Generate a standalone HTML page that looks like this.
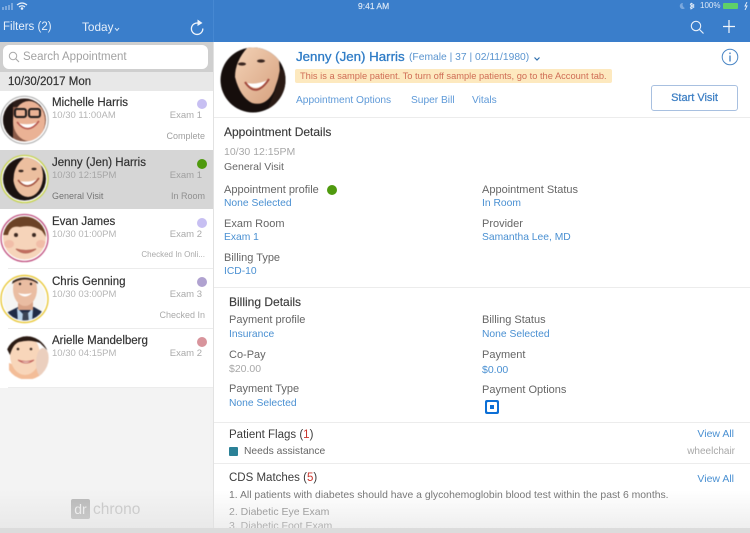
<!DOCTYPE html>
<html><head><meta charset="utf-8">
<style>
html,body{margin:0;padding:0;width:750px;height:533px;overflow:hidden;background:#fff;font-family:"Liberation Sans",sans-serif}
#p{position:absolute;left:0;top:0;width:750px;height:533px;overflow:hidden;background:#fff;filter:blur(.35px)}
.a{position:absolute}
.t{position:absolute;white-space:nowrap;line-height:14px;height:14px;font-size:11px;color:#666}
.r{text-align:right}
.b{color:#4a90d2}
.g{color:#a8a8a8}
.n{font-size:11.5px;color:#333;-webkit-text-stroke:.2px #333}
.h{font-size:12px;color:#3c3c3c;-webkit-text-stroke:.15px #3c3c3c}
.s{font-size:9px;color:#aaa}
.d{position:absolute;width:10px;height:10px;border-radius:50%}
.l{position:absolute;height:1px;background:#ececec}
.f{filter:blur(.4px)}
svg{position:absolute}
</style></head><body><div id="p">

<div class="a" style="left:0;top:0;width:750px;height:42px;background:#3a7ecb"></div>
<div class="a" style="left:213px;top:0;width:1px;height:42px;background:#4688d2"></div>

<!-- status bar -->
<svg style="left:2px;top:2px" width="26" height="8" viewBox="0 0 26 8"><rect x="0" y="5" width="2" height="3" fill="#7ba8dd"/><rect x="3" y="4" width="2" height="4" fill="#7ba8dd"/><rect x="6" y="3" width="2" height="5" fill="#7ba8dd"/><rect x="9" y="1" width="2" height="7" fill="#7ba8dd"/><path d="M15 3Q20 -1 25 3M17 5Q20 2.5 23 5" stroke="#e8f0fa" stroke-width="1.3" fill="none"/><circle cx="20" cy="6.5" r="1.3" fill="#e8f0fa"/></svg>
<div class="t" style="left:358px;top:-1px;font-size:8.5px;color:#dce8f6;-webkit-text-stroke:.15px #dce8f6">9:41 AM</div>
<svg style="left:678px;top:2px" width="72" height="8" viewBox="0 0 72 8"><path d="M5 1A3 3 0 1 0 7 6A3.5 3.5 0 0 1 5 1Z" fill="#7ba8dd"/><path d="M13 1L16 3L12 6M12 2L16 5L13 7V1" stroke="#e8f0fa" fill="none" stroke-width=".8"/><rect x="45" y="1" width="15" height="6" rx="1" fill="#5fd068"/><path d="M69 0L67 4H69L67 8" stroke="#e8f0fa" fill="none" stroke-width=".9"/></svg>
<div class="t" style="left:700px;top:-1px;font-size:8px;color:#dce8f6">100%</div>

<!-- nav -->
<div class="t" style="left:3px;top:20px;font-size:11.5px;color:#e6effa">Filters (2)</div>
<div class="t" style="left:82px;top:20px;font-size:11.8px;color:#e6effa">Today</div>
<svg style="left:114px;top:27px" width="6" height="5" viewBox="0 0 6 5"><path d="M1 1L3 3.5L5 1" stroke="#e6effa" fill="none" stroke-width="1"/></svg>
<svg style="left:189px;top:19px" width="16" height="17" viewBox="0 0 16 17"><path d="M9.5 4.2A5.7 5.7 0 1 0 13.8 9.5" stroke="#eef4fb" stroke-width="1.3" fill="none"/><path d="M8.5 0.5L13.5 4L8.5 7Z" fill="#eef4fb"/></svg>
<svg style="left:689px;top:19px" width="16" height="16" viewBox="0 0 16 16"><circle cx="7" cy="7" r="4.7" stroke="#e6effa" stroke-width="1.1" fill="none"/><path d="M10.5 10.5L14.5 14.5" stroke="#e6effa" stroke-width="1.2"/></svg>
<svg style="left:723px;top:20px" width="12" height="13" viewBox="0 0 12 13"><path d="M6 0V13M0 6.5H12" stroke="#f2f6fc" stroke-width="1.2"/></svg>

<!-- sidebar -->
<div class="a" style="left:0;top:42px;width:213px;height:491px;background:#f3f3f3"></div>
<div class="a" style="left:213px;top:42px;width:1px;height:491px;background:#e2e2e2"></div>
<div class="a" style="left:0;top:42px;width:213px;height:30px;background:#cfcfcf"></div>
<div class="a" style="left:3px;top:45px;width:205px;height:24px;border-radius:6px;background:#fff"></div>
<svg style="left:8px;top:51px" width="12" height="12" viewBox="0 0 12 12"><circle cx="5" cy="5" r="3.7" stroke="#aaa" stroke-width="1" fill="none"/><path d="M7.8 7.8L11 11" stroke="#aaa" stroke-width="1.1"/></svg>
<div class="t" style="left:23px;top:50px;font-size:11.5px;color:#a2a2a2">Search Appointment</div>
<div class="a" style="left:0;top:72px;width:213px;height:19px;background:#e8e8e8"></div>
<div class="t n" style="left:8px;top:75px;font-size:11.5px;color:#333">10/30/2017 Mon</div>

<div class="a" style="left:0;top:91px;width:213px;height:297px;background:#fff"></div>
<div class="a" style="left:0;top:150px;width:213px;height:59px;background:#d6d6d6"></div>
<div class="l" style="left:8px;top:268px;width:205px"></div>
<div class="l" style="left:8px;top:328px;width:205px"></div>
<div class="l" style="left:8px;top:387px;width:205px"></div>

<!-- avatars -->
<svg class="f" style="left:0;top:95px" width="50" height="50" viewBox="0 0 50 50"><defs><clipPath id="c1"><circle cx="24.5" cy="25" r="21.5"/></clipPath></defs><circle cx="24.5" cy="25" r="23.7" fill="#fff" stroke="#a9a9a9" stroke-width="1"/><g clip-path="url(#c1)"><rect width="50" height="50" fill="#8a5a48"/><rect x="0" y="0" width="50" height="12" fill="#2b1c18"/><rect x="0" y="0" width="13" height="50" fill="#1d1412"/><ellipse cx="29" cy="26" rx="16" ry="20" fill="#eab295"/><rect x="15" y="14" width="11" height="8" rx="2" fill="none" stroke="#1e1a1a" stroke-width="2"/><rect x="29" y="14" width="11" height="8" rx="2" fill="none" stroke="#1e1a1a" stroke-width="2"/><path d="M18 28Q28 38 38 27Q28 31 18 28Z" fill="#fff"/><path d="M17 27Q28 41 39 26" stroke="#b5564e" fill="none" stroke-width="1.5"/></g></svg>

<svg class="f" style="left:0;top:154px" width="50" height="50" viewBox="0 0 50 50"><defs><clipPath id="c2"><circle cx="24.5" cy="25" r="21.5"/></clipPath></defs><circle cx="24.5" cy="25" r="23.5" fill="#fff" stroke="#c5d248" stroke-width="1.3"/><g clip-path="url(#c2)"><rect width="50" height="50" fill="#1a1210"/><ellipse cx="28" cy="22" rx="15" ry="21" fill="#ecbf9f"/><path d="M8 4H24Q16 10 14 20Q12 34 16 46L4 46Z" fill="#1a1210"/><path d="M19 27Q28 36 38 25Q29 29 19 27Z" fill="#fff"/><path d="M18 26Q28 39 39 24" stroke="#a0503f" fill="none" stroke-width="1.5"/><ellipse cx="21" cy="17" rx="2.5" ry="1.2" fill="#33221c"/><ellipse cx="34" cy="15" rx="2.5" ry="1.2" fill="#33221c"/></g></svg>

<svg class="f" style="left:0;top:213px" width="50" height="50" viewBox="0 0 50 50"><defs><clipPath id="c3"><circle cx="24.5" cy="25" r="21.5"/></clipPath></defs><circle cx="24.5" cy="25" r="23.5" fill="#fff" stroke="#c0507f" stroke-width="1.3"/><g clip-path="url(#c3)"><rect width="50" height="50" fill="#f6d4ba"/><path d="M2 22Q6 0 26 2Q46 2 46 24L42 18Q32 11 20 14Q10 12 8 22Z" fill="#6b4226"/><circle cx="16" cy="22" r="2" fill="#3c2a22"/><circle cx="34" cy="22" r="2" fill="#3c2a22"/><path d="M16 36Q25 44 36 36Q26 39 16 36Z" fill="#c56d62" stroke="#b76a5a"/><ellipse cx="9" cy="31" rx="5" ry="4" fill="#f1bda8"/><ellipse cx="41" cy="31" rx="5" ry="4" fill="#f1bda8"/></g></svg>

<svg class="f" style="left:0;top:274px" width="50" height="50" viewBox="0 0 50 50"><defs><clipPath id="c4"><circle cx="24.5" cy="25" r="21.5"/></clipPath></defs><circle cx="24.5" cy="25" r="23.5" fill="#fff" stroke="#e9c93c" stroke-width="1.4"/><g clip-path="url(#c4)"><rect width="50" height="50" fill="#f6f6f4"/><path d="M4 50V40L18 33H34L46 40V50Z" fill="#1f2c47"/><path d="M17 34L25 42L33 34L32 50H18Z" fill="#b9d3ea"/><path d="M23 38H28L29 50H22Z" fill="#3a4455"/><rect x="18" y="22" width="15" height="14" fill="#d8a286"/><ellipse cx="25" cy="15" rx="12" ry="17" fill="#eabda2"/><path d="M12 10Q14 -1 25 0Q37 -1 38 10L35 8Q25 3 15 8Z" fill="#3a2a22"/><path d="M18 19Q25 26 32 19Q25 21 18 19Z" fill="#fff"/><circle cx="20" cy="10" r="1.2" fill="#2c1f1c"/><circle cx="31" cy="10" r="1.2" fill="#2c1f1c"/></g></svg>

<svg class="f" style="left:4px;top:333px" width="46" height="46" viewBox="0 0 46 46"><defs><clipPath id="c5"><circle cx="23" cy="25" r="21.7"/></clipPath></defs><g clip-path="url(#c5)"><rect width="46" height="46" fill="#fff"/><path d="M5 46V30L22 36L38 30V46Z" fill="#f3bd98"/><ellipse cx="21" cy="22" rx="15" ry="20" fill="#f8d6ba"/><path d="M3 16Q8 5 22 3Q36 3 44 18L36 10Q26 6 15 9Q9 11 6 22Z" fill="#2a1b14"/><ellipse cx="39" cy="30" rx="7" ry="15" fill="#ebcfbe"/><path d="M14 27Q22 33 30 27Q22 30 14 27Z" fill="#fff" stroke="#c0605a" stroke-width=".8"/><circle cx="14" cy="16" r="1.3" fill="#3a2820"/><circle cx="27" cy="16" r="1.3" fill="#3a2820"/></g></svg>

<!-- rows -->
<div class="t n" style="left:52px;top:96px">Michelle Harris</div>
<div class="t" style="left:52px;top:109px;font-size:9.5px;color:#b5b5b5">10/30 11:00AM</div>
<div class="d" style="left:197px;top:99px;background:#c7bff2"></div>
<div class="t s r" style="right:548px;top:109px;font-size:9.5px">Exam 1</div>
<div class="t s r" style="right:545px;top:129px;color:#a0a0a0">Complete</div>

<div class="t n" style="left:52px;top:156px">Jenny (Jen) Harris</div>
<div class="t" style="left:52px;top:169px;font-size:9.5px;color:#a6a6a6">10/30 12:15PM</div>
<div class="d" style="left:197px;top:159px;background:#4f9a0e"></div>
<div class="t s r" style="right:548px;top:169px;font-size:9.5px;color:#a0a0a0">Exam 1</div>
<div class="t" style="left:52px;top:189px;font-size:9px;color:#757575">General Visit</div>
<div class="t s r" style="right:545px;top:189px;color:#909090">In Room</div>

<div class="t n" style="left:52px;top:215px">Evan James</div>
<div class="t" style="left:52px;top:228px;font-size:9.5px;color:#b5b5b5">10/30 01:00PM</div>
<div class="d" style="left:197px;top:218px;background:#c7bff2"></div>
<div class="t s r" style="right:548px;top:228px;font-size:9.5px">Exam 2</div>
<div class="t s r" style="right:545px;top:248px;font-size:8px">Checked In Onli...</div>

<div class="t n" style="left:52px;top:275px">Chris Genning</div>
<div class="t" style="left:52px;top:288px;font-size:9.5px;color:#b5b5b5">10/30 03:00PM</div>
<div class="d" style="left:197px;top:277px;background:#b0a2d0"></div>
<div class="t s r" style="right:548px;top:288px;font-size:9.5px">Exam 3</div>
<div class="t s r" style="right:545px;top:308px">Checked In</div>

<div class="t n" style="left:52px;top:334px">Arielle Mandelberg</div>
<div class="t" style="left:52px;top:347px;font-size:9.5px;color:#b5b5b5">10/30 04:15PM</div>
<div class="d" style="left:197px;top:337px;background:#d8949c"></div>
<div class="t s r" style="right:548px;top:347px;font-size:9.5px">Exam 2</div>

<!-- logo -->
<div class="a" style="left:71px;top:499px;width:19px;height:20px;border-radius:2px;background:#b5b5b5;color:#f1f1f1;font-size:14px;line-height:20px;text-align:center">dr</div>
<div class="t" style="left:93px;top:501px;font-size:15.5px;line-height:17px;height:17px;color:#c4c4c4">chrono</div>

<!-- header -->
<svg class="f" style="left:220px;top:47px" width="66" height="66" viewBox="0 0 66 66"><defs><clipPath id="c6"><circle cx="33" cy="33" r="32.5"/></clipPath><linearGradient id="sk" x1="0" y1="0" x2="1" y2="1"><stop offset="0" stop-color="#f3d2b6"/><stop offset="1" stop-color="#d6a07e"/></linearGradient></defs><g clip-path="url(#c6)"><rect width="66" height="66" fill="#160e0c"/><path d="M28 0H58L60 26L54 44Q46 60 32 56Q20 50 15 30Q15 14 28 0Z" fill="url(#sk)"/><path d="M60 22L66 24V66H46L56 42Z" fill="#2a1a14"/><path d="M26 36Q37 47 48 33Q37 38 26 36Z" fill="#fff"/><path d="M25 35Q36 52 49 32" stroke="#a1483c" stroke-width="2" fill="none"/><ellipse cx="22" cy="17" rx="4" ry="1.6" fill="#3a2620"/><ellipse cx="41" cy="14" rx="4" ry="1.6" fill="#3a2620"/></g></svg>

<div class="t" style="left:296px;top:49px;font-size:13.3px;line-height:16px;height:16px;color:#2f7cc6;-webkit-text-stroke:.3px #2f7cc6">Jenny (Jen) Harris</div>
<div class="t" style="left:409px;top:51px;font-size:10.3px;color:#5a94cf">(Female | 37 | 02/11/1980)</div>
<svg style="left:533px;top:56px" width="8" height="6" viewBox="0 0 8 6"><path d="M1.5 1.5L4 4L6.5 1.500" stroke="#2f6fae" fill="none" stroke-width="1.2"/></svg>
<svg style="left:721px;top:48px" width="18" height="18" viewBox="0 0 18 18"><circle cx="9" cy="9" r="7.800" stroke="#4a86c5" fill="none"/><rect x="8.300" y="7.500" width="1.400" height="6" fill="#4a86c5"/><rect x="8.300" y="4.500" width="1.400" height="1.600" fill="#4a86c5"/></svg>
<div class="a" style="left:295px;top:69px;width:317px;height:14px;border-radius:2px;background:#fde9bf"></div>
<div class="t" style="left:300px;top:69px;font-size:9.3px;color:#cf6d55">This is a sample patient. To turn off sample patients, go to the Account tab.</div>
<div class="t b" style="left:296px;top:94px;font-size:10.2px;color:#5f9ad8">Appointment Options</div>
<div class="t b" style="left:411px;top:94px;font-size:10.2px;color:#5f9ad8">Super Bill</div>
<div class="t b" style="left:472px;top:94px;font-size:10.2px;color:#5f9ad8">Vitals</div>
<div class="a" style="left:651px;top:85px;width:85px;height:24px;border:1px solid #a8c0e0;border-radius:3px;background:#fff;text-align:center;line-height:25px;font-size:11px;color:#3d7fc4;-webkit-text-stroke:.25px #3d7fc4">Start Visit</div>
<div class="l" style="left:214px;top:117px;width:536px"></div>

<!-- appointment details -->
<div class="t h" style="left:224px;top:125px">Appointment Details</div>
<div class="t g" style="left:224px;top:145px;font-size:10.5px">10/30 12:15PM</div>
<div class="t" style="left:224px;top:160px;font-size:10.5px">General Visit</div>
<div class="t" style="left:224px;top:183px;font-size:11px">Appointment profile</div>
<div class="d" style="left:327px;top:185px;background:#4f9a0e"></div>
<div class="t b" style="left:224px;top:197px;font-size:10.3px">None Selected</div>
<div class="t" style="left:482px;top:183px;font-size:11px">Appointment Status</div>
<div class="t b" style="left:482px;top:197px;font-size:10.3px">In Room</div>
<div class="t" style="left:224px;top:217px;font-size:11px">Exam Room</div>
<div class="t b" style="left:224px;top:231px;font-size:10.3px">Exam 1</div>
<div class="t" style="left:482px;top:217px;font-size:11px">Provider</div>
<div class="t b" style="left:482px;top:231px;font-size:10.3px">Samantha Lee, MD</div>
<div class="t" style="left:224px;top:251px;font-size:11px">Billing Type</div>
<div class="t b" style="left:224px;top:265px;font-size:10.3px">ICD-10</div>
<div class="l" style="left:214px;top:287px;width:536px"></div>

<!-- billing -->
<div class="t h" style="left:229px;top:295px">Billing Details</div>
<div class="t" style="left:229px;top:313px;font-size:11px">Payment profile</div>
<div class="t b" style="left:229px;top:328px;font-size:10.3px">Insurance</div>
<div class="t" style="left:482px;top:313px;font-size:11px">Billing Status</div>
<div class="t b" style="left:482px;top:328px;font-size:10.3px">None Selected</div>
<div class="t" style="left:229px;top:348px;font-size:11px">Co-Pay</div>
<div class="t g" style="left:229px;top:362px;font-size:10.5px">$20.00</div>
<div class="t" style="left:482px;top:348px;font-size:11px">Payment</div>
<div class="t b" style="left:482px;top:363px;font-size:10.5px">$0.00</div>
<div class="t" style="left:229px;top:382px;font-size:11px">Payment Type</div>
<div class="t b" style="left:229px;top:397px;font-size:10.3px">None Selected</div>
<div class="t" style="left:482px;top:383px;font-size:11px">Payment Options</div>
<div class="a" style="left:485px;top:400px;width:14px;height:14px;background:#0c6fd6;border-radius:2px"></div>
<div class="a" style="left:487px;top:402px;width:10px;height:10px;background:#fff;border-radius:1px"></div>
<div class="a" style="left:490px;top:405px;width:4px;height:4px;background:#0c6fd6"></div>
<div class="l" style="left:214px;top:422px;width:536px"></div>

<!-- flags -->
<div class="t h" style="left:229px;top:428px;font-size:11.5px;-webkit-text-stroke:0">Patient Flags (<span style="color:#c8362d">1</span>)</div>
<div class="t b r" style="right:16px;top:427px;font-size:10.5px">View All</div>
<div class="a" style="left:229px;top:447px;width:9px;height:9px;border-radius:1px;background:#2b8197"></div>
<div class="t" style="left:244px;top:445px;font-size:10.3px">Needs assistance</div>
<div class="t g r" style="right:15px;top:445px;font-size:10px">wheelchair</div>
<div class="l" style="left:214px;top:463px;width:536px"></div>

<div class="t h" style="left:229px;top:471px;font-size:11.5px;-webkit-text-stroke:0">CDS Matches (<span style="color:#c8362d">5</span>)</div>
<div class="t b r" style="right:16px;top:472px;font-size:10.5px">View All</div>
<div class="t" style="left:229px;top:489px;font-size:10.4px;color:#707070">1. All patients with diabetes should have a glycohemoglobin blood test within the past 6 months.</div>
<div class="t" style="left:229px;top:505px;font-size:10.5px;color:#808080">2. Diabetic Eye Exam</div>
<div class="t" style="left:229px;top:519px;font-size:10.5px;color:#808080">3. Diabetic Foot Exam</div>

<!-- bottom fade -->
<div class="a" style="left:0;top:490px;width:750px;height:38px;background:linear-gradient(rgba(225,225,225,0),rgba(225,225,225,.55))"></div>
<div class="a" style="left:0;top:528px;width:750px;height:5px;background:#dcdcdc"></div>
</div></body></html>
